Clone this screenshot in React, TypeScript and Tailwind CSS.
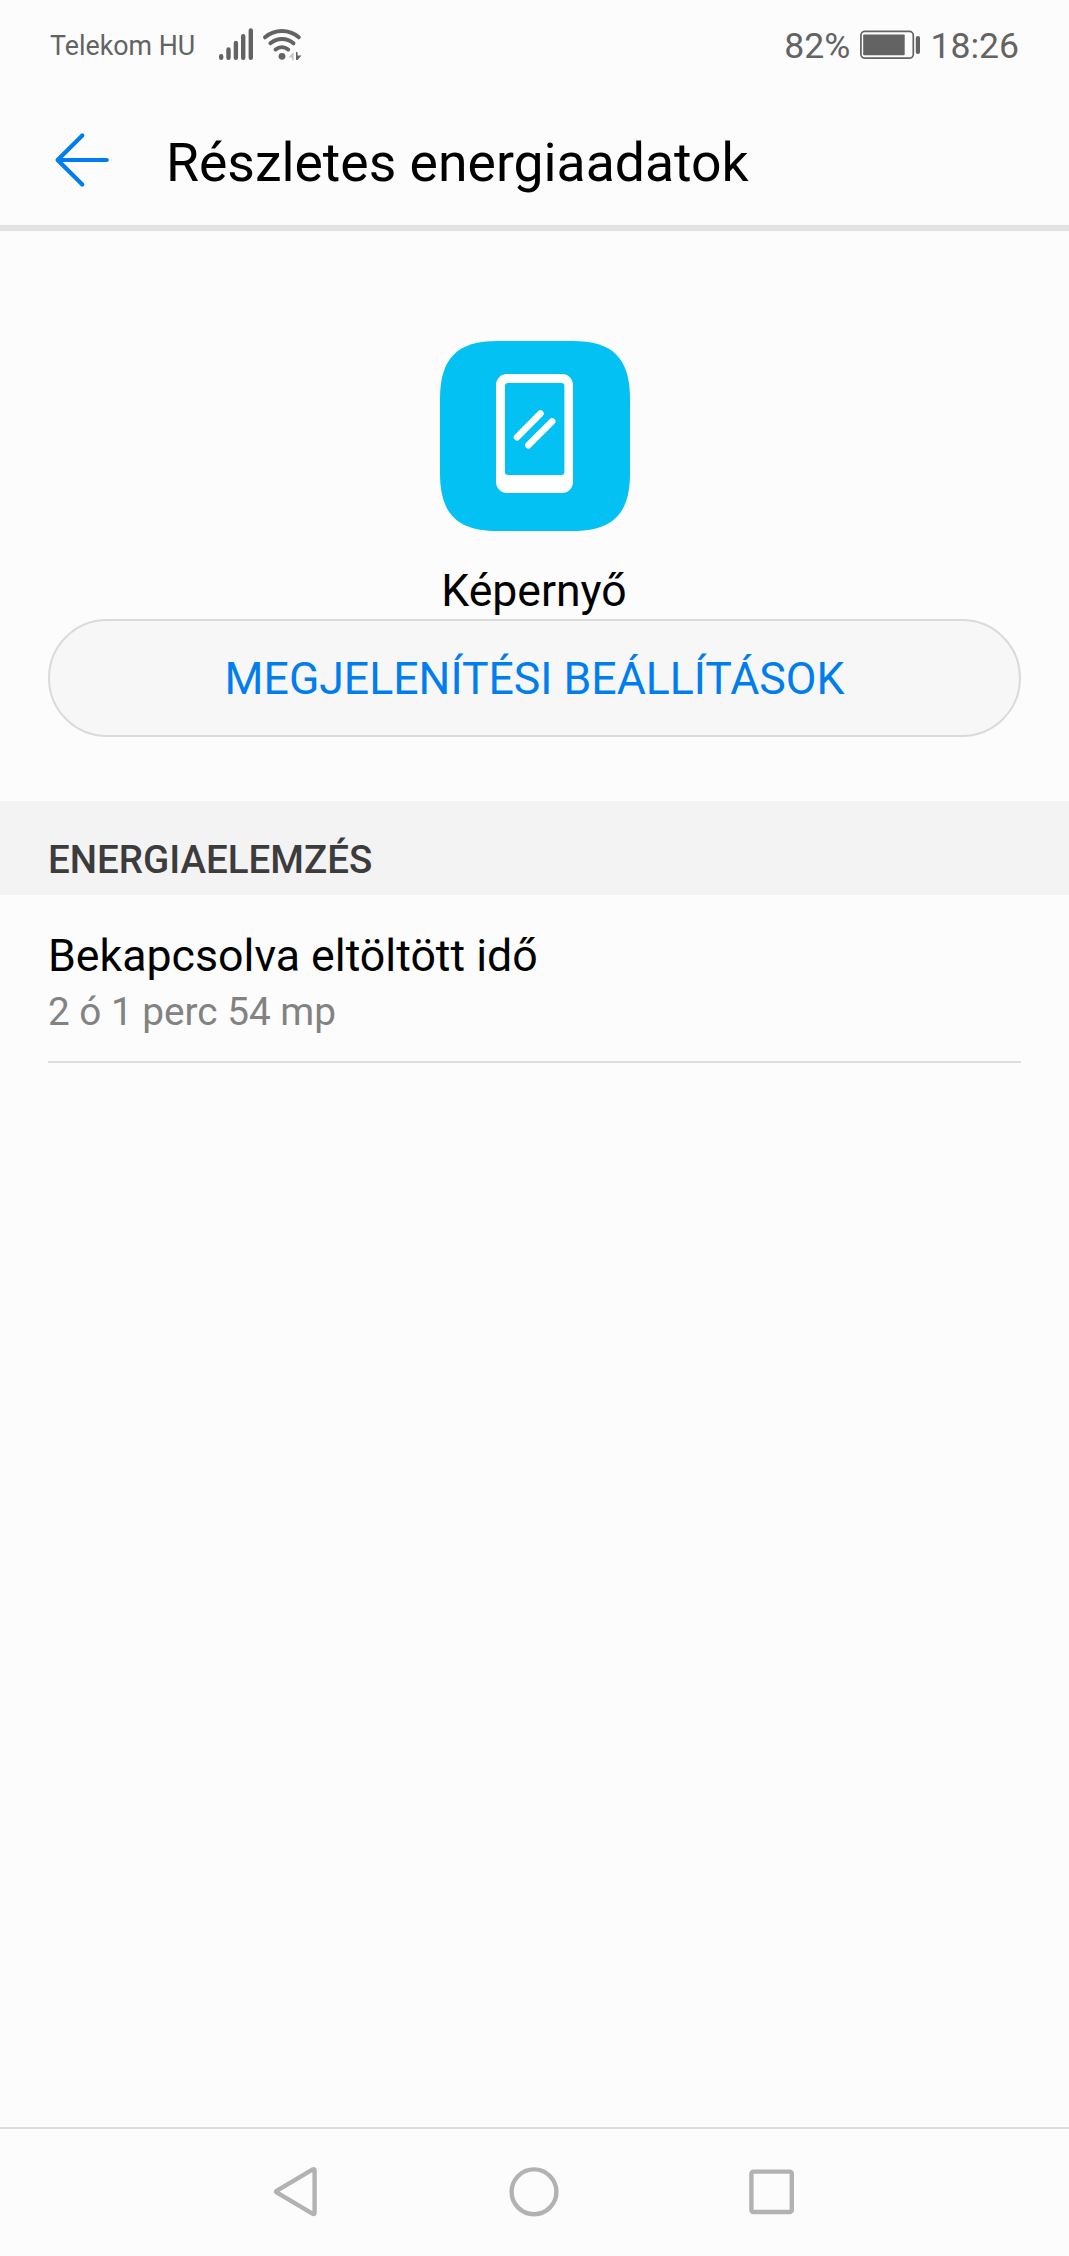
type DetailRow = {
  label: string;
  value: string;
};

const details: DetailRow[] = [
  { label: "Bekapcsolva eltöltött idő", value: "2 ó 1 perc 54 mp" },
];

function SignalIcon() {
  return (
    <svg width="36" height="34" viewBox="0 0 36 34" fill="none" stroke="#636363" strokeWidth="4.4" strokeLinecap="round">
      <path d="M3.2 28.2V29.8M10.5 21.5V29.8M17.9 15V29.8M25.2 8.2V29.8M32.8 2.5V29.8" />
    </svg>
  );
}

function WifiIcon() {
  return (
    <svg width="40" height="34" viewBox="0 0 40 34" fill="none">
      <g stroke="#636363" strokeWidth="4" strokeLinecap="round">
        <path d="M3 9.3C13 1 27 1 36.8 9.3" />
        <path d="M8.4 15.3C15 9.6 25 9.6 31.4 15.3" />
        <path d="M13.6 21.5C17.4 18.4 22.4 18.4 26.2 21.5" />
      </g>
      <circle cx="20" cy="28.3" r="3.4" fill="#636363" />
      <path d="M31.6 24V32.2H30V29.6H26.4Z" fill="#c4c4c4" />
      <path d="M34 23.8L35.6 24.6V27.4H39.4L35.6 32H34Z" fill="#636363" />
    </svg>
  );
}

function BatteryIcon() {
  return (
    <svg width="62" height="30" viewBox="0 0 62 30" fill="none">
      <rect x="0.9" y="1.4" width="52.4" height="26.8" rx="4" stroke="#636363" strokeWidth="1.7" />
      <rect x="3.2" y="4.5" width="41.5" height="20.8" rx="0.8" fill="#636363" />
      <rect x="55.8" y="6" width="4.2" height="18" rx="2" fill="#636363" />
    </svg>
  );
}

function StatusBar() {
  return (
    <div className="flex h-[92px] items-center justify-between px-[50px] text-[#636363]">
      <div className="flex items-center">
        <span className="text-[26.8px]">Telekom HU</span>
        <div className="ml-[23px] flex gap-[8px] pb-[2px]">
          <SignalIcon />
          <WifiIcon />
        </div>
      </div>
      <div className="flex items-center text-[35.6px]">
        <span className="pt-px">82%</span>
        <div className="ml-[10px] mr-[8px] pb-[2px]">
          <BatteryIcon />
        </div>
        <span className="pt-px">18:26</span>
      </div>
    </div>
  );
}

function Header({ title }: { title: string }) {
  return (
    <header className="flex h-[139px] items-center border-b-[6px] border-[#e2e2e2] pl-[54px]">
      <svg
        className="mt-[3px]"
        width="56"
        height="56"
        viewBox="0 0 56 56"
        fill="none"
        stroke="#007dee"
        strokeWidth="4.2"
        strokeLinecap="round"
        strokeLinejoin="round"
      >
        <path d="M28.3 3.5L3.6 28L28.3 52.5M4 28H52.8" />
      </svg>
      <h1 className="ml-[56px] pt-[10px] text-[53.5px] text-black">{title}</h1>
    </header>
  );
}

function ScreenIcon() {
  return (
    <svg width="190" height="190" viewBox="0 0 190 190" fill="none">
      <path
        d="M0 95V58C0 17 17 0 58 0H132C173 0 190 17 190 58V132C190 173 173 190 132 190H58C17 190 0 173 0 132Z"
        fill="#04c1f3"
      />
      <rect x="56" y="33" width="77" height="119" rx="11" fill="#ffffff" />
      <rect x="65" y="42" width="59.4" height="92" rx="3" fill="#04c1f3" />
      <path d="M77 96.2L100.4 72.6M88.4 104.2L112.2 80.4" stroke="#ffffff" strokeWidth="6.6" strokeLinecap="round" />
    </svg>
  );
}

function NavBar() {
  return (
    <nav className="flex h-[129px] items-center justify-center gap-[184px] border-t-2 border-[#dedede] pb-[2px] pr-px">
      <svg width="54" height="54" viewBox="0 0 54 54" fill="none" stroke="#b2b2b2" strokeWidth="4.4" strokeLinejoin="round">
        <path d="M7.6 27.4Q6.4 26.6 7.6 25.8L43.4 4.6Q45.6 3.6 45.6 5.6V47.6Q45.6 49.8 43.4 48.6Z" />
      </svg>
      <svg width="54" height="54" viewBox="0 0 54 54" fill="none" stroke="#b2b2b2" strokeWidth="4.4">
        <circle cx="27" cy="26.8" r="22.4" />
      </svg>
      <svg width="54" height="54" viewBox="0 0 54 54" fill="none" stroke="#b2b2b2" strokeWidth="4.4">
        <rect x="6.4" y="6.6" width="40.4" height="40.4" rx="2" />
      </svg>
    </nav>
  );
}

export default function App() {
  return (
    <div className="flex h-[2256px] w-[1069px] flex-col bg-[#fcfcfc] font-['Roboto',sans-serif]">
      <StatusBar />
      <Header title="Részletes energiaadatok" />

      <main className="flex-1">
        <div className="flex flex-col items-center px-12 pt-[110px]">
          <ScreenIcon />
          <p className="mt-[32px] pr-px text-[44.5px] leading-[56px] text-black">Képernyő</p>
          <button className="h-[118px] w-full rounded-full border-2 border-[#dadada] bg-[#f7f7f7] pt-[3px] text-[44.6px] text-[#007dee]">
            MEGJELENÍTÉSI BEÁLLÍTÁSOK
          </button>
        </div>

        <h2 className="mt-[64px] flex h-[94px] items-center bg-[#f3f3f3] px-12 pt-[23px] text-[38.5px] font-medium text-[#3c3c3c]">
          ENERGIAELEMZÉS
        </h2>

        {details.map((row) => (
          <div key={row.label} className="mx-12 border-b-2 border-[#dedede] pb-[23px] pt-[33px]">
            <p className="text-[44.7px] leading-[56px] text-black">{row.label}</p>
            <p className="mt-[2px] text-[38.7px] leading-[52px] text-[#828282]">{row.value}</p>
          </div>
        ))}
      </main>

      <NavBar />
    </div>
  );
}
